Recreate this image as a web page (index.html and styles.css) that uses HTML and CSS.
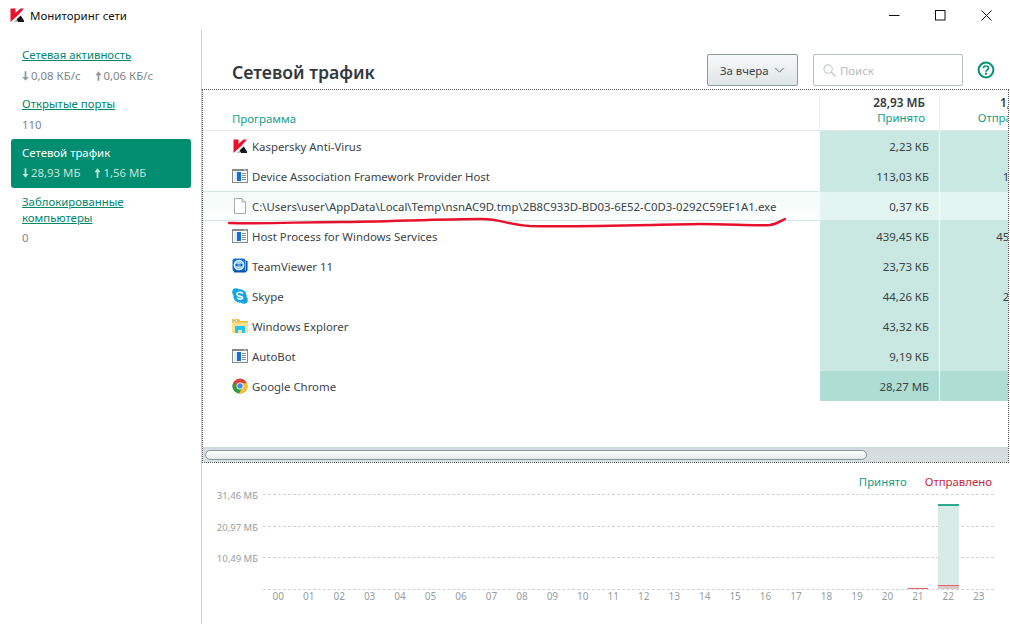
FILE: index.html
```html
<!DOCTYPE html>
<html lang="ru">
<head>
<meta charset="utf-8">
<title>Мониторинг сети</title>
<link rel="stylesheet" href="styles.css">
</head>
<body>
<svg class="defs" width="0" height="0" aria-hidden="true">
  <defs>
    <symbol id="i-k" viewBox="0 0 16 16">
      <path d="M1.500 1.500h5v4.200L11.500 1.500h3.500L9 8.200 1.500 15z" fill="#e8102c"/>
      <path d="M9.500 10.500l2.300-2 3.200 5V15H9l-1.500-2.500z" fill="#15181a"/>
      <path d="M4.500 15L7.500 12.500 9 15z" fill="#b9bcbe"/>
    </symbol>
    <symbol id="i-win" viewBox="0 0 16 16">
      <rect x="0" y="1" width="16" height="14" fill="#85898d"/>
      <rect x="1" y="3" width="14" height="11" fill="#fff"/>
      <rect x="12" y="1.500" width="2" height="1" fill="#dfe1e3"/>
      <rect x="2" y="4" width="3" height="9" fill="#e3ecf6"/>
      <rect x="5" y="4" width="4" height="9" fill="#0f6fd8"/>
      <path d="M10 5.500h4M10 7.500h4M10 9.500h4M10 11.500h4" stroke="#8b8f94"/>
    </symbol>
    <symbol id="i-file" viewBox="0 0 16 16">
      <path d="M2.500.500h7.500l3.500 3.500v11.500h-11z" fill="#fff" stroke="#a8aaac"/>
      <path d="M10 .500v3.500h3.500" fill="#eee" stroke="#a8aaac"/>
    </symbol>
    <symbol id="i-tv" viewBox="0 0 16 16">
      <rect x=".5" y=".5" width="13" height="13" rx="2.500" fill="#0a6fd6"/>
      <path d="M2 14.500h11.500l2-2V3h-1.500v9.500H2z" fill="#0b4fa8"/>
      <circle cx="7" cy="7" r="5.300" fill="#fff"/>
      <circle cx="7" cy="7" r="4.300" fill="#9fd4f7"/>
      <path d="M3 7l2.200-1.800v1.200h3.600V5.200L11 7 8.800 8.800V7.600H5.200v1.200z" fill="#0a57b5"/>
    </symbol>
    <symbol id="i-skype" viewBox="0 0 16 16">
      <circle cx="4" cy="4" r="3.800" fill="#12a5e2"/>
      <circle cx="12" cy="12" r="3.800" fill="#12a5e2"/>
      <circle cx="8" cy="8" r="6.700" fill="#12a5e2"/>
      <path d="M11 5.600c-.6-1-1.700-1.400-3-1.400-1.700 0-3 .8-3 2.100 0 2.700 5.600 1.500 5.600 3.500 0 .8-1 1.300-2.400 1.300-1.300 0-2.300-.5-2.900-1.500" fill="none" stroke="#fff" stroke-width="1.600"/>
    </symbol>
    <symbol id="i-folder" viewBox="0 0 16 16">
      <path d="M0 1h6.500l1.500 2H16v12H0z" fill="#fbe08e"/>
      <path d="M0 1h6.500l1.500 2H16v1.500H0z" fill="#e9bb48"/>
      <rect x="1" y="1.800" width="4" height="1.500" fill="#fff"/>
      <rect x="1.500" y="2.200" width="2" height=".8" fill="#2c9fe0"/>
      <path d="M3 15V8h10v7h-3v-3H6v3z" fill="#22c3f5"/>
    </symbol>
    <symbol id="i-chrome" viewBox="0 0 16 16">
      <circle cx="8" cy="8" r="7.500" fill="#db4437"/>
      <path d="M1.500 4.200A7.500 7.500 0 0 0 7 15.400L10.500 9.500H6z" fill="#2f9e44"/>
      <path d="M15 5.200H8.500L10.800 9 7 15.430A7.500 7.500 0 0 0 15 5.200z" fill="#f7c325"/>
      <circle cx="8" cy="8" r="3.500" fill="#fff"/>
      <circle cx="8" cy="8" r="2.700" fill="#4a89e8"/>
    </symbol>
    <symbol id="i-down" viewBox="0 0 8 11"><path d="M3 0h2v6.500h2.500L4 11 .5 6.500H3z" fill="currentColor"/></symbol>
    <symbol id="i-up" viewBox="0 0 8 11"><path d="M3 11h2V4.500h2.500L4 0 .5 4.500H3z" fill="currentColor"/></symbol>
  </defs>
</svg>

<div class="window">
  <header class="titlebar">
    <svg class="title-icon"><use href="#i-k"/></svg>
    <span class="title-text">Мониторинг сети</span>
    <div class="win-controls">
      <svg class="win-btn" viewBox="0 0 11 11"><path d="M0 5.500h10.500" stroke="#111" fill="none"/></svg>
      <svg class="win-btn" viewBox="0 0 11 11"><rect x=".5" y=".5" width="9.500" height="9.500" stroke="#111" fill="none"/></svg>
      <svg class="win-btn" viewBox="0 0 11 11"><path d="M.5.500l10 10M10.500.500l-10 10" stroke="#111" fill="none"/></svg>
    </div>
  </header>

  <div class="app">
    <nav class="sidebar">
      <div class="nav-item first">
        <a class="nav-link">Сетевая активность</a>
        <div class="nav-stat"><svg class="arr"><use href="#i-down"/></svg>0,08 КБ/с<svg class="arr up"><use href="#i-up"/></svg>0,06 КБ/с</div>
      </div>
      <div class="nav-item second">
        <a class="nav-link">Открытые порты</a>
        <div class="nav-stat">110</div>
      </div>
      <div class="nav-item active">
        <a class="nav-link">Сетевой трафик</a>
        <div class="nav-stat"><svg class="arr"><use href="#i-down"/></svg>28,93 МБ<svg class="arr up"><use href="#i-up"/></svg>1,56 МБ</div>
      </div>
      <div class="nav-item blocked">
        <a class="nav-link">Заблокированные компьютеры</a>
        <div class="nav-stat">0</div>
      </div>
    </nav>

    <main class="main">
      <div class="toolbar">
        <h1 class="heading">Сетевой трафик</h1>
        <button class="period">За вчера
          <svg class="chev" viewBox="0 0 12 7"><path d="M1 1l5 5 5-5" fill="none" stroke="#5c6569" stroke-width="1.100"/></svg>
        </button>
        <div class="search">
          <svg class="search-ic" viewBox="0 0 14 14"><circle cx="5.500" cy="5.500" r="4.500" fill="none" stroke="#c4cacc" stroke-width="1.200"/><path d="M9 9l4.500 4.500" stroke="#c4cacc" stroke-width="1.500"/></svg>
          <span>Поиск</span>
        </div>
        <svg class="help" viewBox="0 0 18 18"><circle cx="9" cy="9" r="7.400" fill="none" stroke="#07936f" stroke-width="2"/><path d="M6.500 7.200c0-1.500 1.100-2.200 2.500-2.200s2.500.8 2.500 2.100c0 1.900-2.500 1.800-2.500 3.700" fill="none" stroke="#07936f" stroke-width="1.700"/><rect x="8" y="11.700" width="2" height="2" fill="#07936f"/></svg>
      </div>

      <section class="table-box">
        <div class="table">
          <div class="row head">
            <div class="c-name"><span class="col-title">Программа</span></div>
            <div class="c-val"><b>28,93 МБ</b><span class="col-title">Принято</span></div>
            <div class="c-val"><b>1,56 МБ</b><span class="col-title">Отправлено</span></div>
          </div>
          <div class="row"><div class="c-name"><svg class="ic"><use href="#i-k"/></svg>Kaspersky Anti-Virus</div><div class="c-val">2,23 КБ</div><div class="c-val">3,11 КБ</div></div>
          <div class="row"><div class="c-name"><svg class="ic"><use href="#i-win"/></svg>Device Association Framework Provider Host</div><div class="c-val">113,03 КБ</div><div class="c-val">18,42 КБ</div></div>
          <div class="row selected"><div class="c-name"><svg class="ic"><use href="#i-file"/></svg>C:\Users\user\AppData\Local\Temp\nsnAC9D.tmp\2B8C933D-BD03-6E52-C0D3-0292C59EF1A1.exe</div><div class="c-val">0,37 КБ</div><div class="c-val">0,72 КБ</div></div>
          <div class="row"><div class="c-name"><svg class="ic"><use href="#i-win"/></svg>Host Process for Windows Services</div><div class="c-val">439,45 КБ</div><div class="c-val">451,20 КБ</div></div>
          <div class="row"><div class="c-name"><svg class="ic"><use href="#i-tv"/></svg>TeamViewer 11</div><div class="c-val">23,73 КБ</div><div class="c-val">9,06 КБ</div></div>
          <div class="row"><div class="c-name"><svg class="ic"><use href="#i-skype"/></svg>Skype</div><div class="c-val">44,26 КБ</div><div class="c-val">25,14 КБ</div></div>
          <div class="row"><div class="c-name"><svg class="ic"><use href="#i-folder"/></svg>Windows Explorer</div><div class="c-val">43,32 КБ</div><div class="c-val">5,27 КБ</div></div>
          <div class="row"><div class="c-name"><svg class="ic"><use href="#i-win"/></svg>AutoBot</div><div class="c-val">9,19 КБ</div><div class="c-val">2,48 КБ</div></div>
          <div class="row chrome"><div class="c-name"><svg class="ic"><use href="#i-chrome"/></svg>Google Chrome</div><div class="c-val">28,27 МБ</div><div class="c-val">1,34 МБ</div></div>
        </div>
        <div class="hscroll"><div class="thumb"></div></div>
      </section>

      <section class="chart">
        <div class="legend"><span class="in">Принято</span><span class="out">Отправлено</span></div>
        <div class="plot">
          <div class="gridline"><span>31,46 МБ</span></div>
          <div class="gridline"><span>20,97 МБ</span></div>
          <div class="gridline"><span>10,49 МБ</span></div>
          <div class="gridline base"></div>
          <div class="bars">
            <div class="slot s21"><i class="sent tiny"></i></div>
            <div class="slot s22"><i class="recv"></i><i class="sent"></i></div>
          </div>
        </div>
        <div class="hours">
          <span>00</span><span>01</span><span>02</span><span>03</span><span>04</span><span>05</span><span>06</span><span>07</span><span>08</span><span>09</span><span>10</span><span>11</span><span>12</span><span>13</span><span>14</span><span>15</span><span>16</span><span>17</span><span>18</span><span>19</span><span>20</span><span>21</span><span>22</span><span>23</span>
        </div>
      </section>
    </main>
  </div>
</div>

<svg class="scribble" viewBox="0 0 1010 630" aria-hidden="true">
  <path d="M229 223C270 224 300 222 340 222S440 219 482 219C500 219 510 225 530 226C580 227 640 225 700 224C730 224 755 226 770 225C777 224 781 221 785 219" fill="none" stroke="#e8112d" stroke-width="2.400" stroke-linecap="round"/>
</svg>
</body>
</html>
```
FILE: styles.css
```css
* { box-sizing: border-box; }
html, body { margin: 0; padding: 0; }
body {
  position: relative;
  width: 1010px;
  height: 630px;
  overflow: hidden;
  background: #fff;
  font-family: "Noto Sans", "Open Sans", "Liberation Sans", sans-serif;
  font-size: 11.4px;
  color: #3b4347;
}
.defs { position: absolute; }
.window { display: flex; flex-direction: column; width: 1010px; height: 630px; }

.titlebar { display: flex; align-items: center; height: 30px; flex: none; padding-left: 9px; }
.title-icon { width: 16px; height: 16px; margin-right: 5px; }
.title-text { color: #111; font-size: 11.5px; }
.win-controls { display: flex; gap: 35px; margin-left: auto; margin-right: 18px; }
.win-btn { width: 11px; height: 11px; }

.app { display: flex; height: 594px; flex: none; }
.sidebar { width: 202px; flex: none; border-right: 1px solid #c6ced1; padding: 17px 10px 0 11px; }
.nav-item { padding: 0 11px; }
.nav-link { display: block; color: #00876c; text-decoration: underline; line-height: 16px; }
.nav-stat { display: flex; align-items: center; color: #7d8588; line-height: 16px; margin-top: 4px; }
.nav-item.first { margin-bottom: 12px; }
.nav-item.first .nav-stat { margin-top: 5px; }
.nav-item.second { margin-bottom: 6px; }
.nav-item.second .nav-stat { margin-top: 5px; }
.arr { width: 7px; height: 10px; margin-right: 2px; flex: none; color: #8f979a; }
.arr.up { margin-left: 14px; }
.nav-item.active {
  background: #008d70;
  border-radius: 3px;
  height: 49px;
  margin-bottom: 6px;
  padding-top: 6px;
}
.nav-item.active .nav-link { color: #fff; text-decoration: none; }
.nav-item.active .nav-stat { color: #c4e5dc; margin-top: 4px; }
.nav-item.active .arr { color: #c4e5dc; }

.main { flex: 1; min-width: 0; display: flex; flex-direction: column; }
.toolbar { display: flex; align-items: center; height: 59px; flex: none; padding: 24px 15px 3px 30px; }
.heading { margin: 0 auto 0 0; font-size: 17.7px; font-weight: 600; color: #33393c; position: relative; top: 2px; }
.period {
  display: flex; align-items: center; justify-content: space-between;
  width: 91px; height: 32px; padding: 0 12px;
  border: 1px solid #8d9a9a; border-radius: 2px;
  background: linear-gradient(#f7f9f9, #dfe6e5);
  font: inherit; color: #3b4347;
}
.chev { width: 11px; height: 6px; }
.search {
  display: flex; align-items: center; gap: 4px;
  width: 150px; height: 32px; margin-left: 15px; padding-left: 9px;
  border: 1px solid #b6bfbf; border-radius: 2px;
  color: #b5bbbd;
}
.search-ic { width: 13px; height: 13px; }
.help { width: 18px; height: 18px; margin-left: 14px; }

.table-box {
  width: 807px; height: 374px; flex: none;
  border: 1px dotted #555; overflow: hidden;
  display: flex; flex-direction: column;
}
.table { flex: 1; min-height: 0; }
.row { display: grid; grid-template-columns: 616px 120px 120px; height: 30px; }
.c-name { display: flex; align-items: center; padding-left: 29px; white-space: nowrap; }
.c-val {
  display: flex; flex-direction: column; justify-content: center; align-items: flex-end;
  padding-right: 10px; background: #c8e8e1; border-left: 1px solid #fff; white-space: nowrap;
}
.ic { width: 16px; height: 16px; margin-right: 4px; flex: none; }
.row.head { height: 41px; border-bottom: 1px solid #e3e6e6; align-items: stretch; }
.row.head .c-name { align-items: flex-end; padding-bottom: 4px; }
.row.head .c-val { background: none; border-left: 1px solid #eef0f0; padding-right: 14px; line-height: 16px; }
.row.head b { font-size: 11.8px; font-weight: 600; color: #33393c; }
.col-title { color: #14a087; }
.row.selected { background: linear-gradient(#f3faf8, #fbfefd); box-shadow: inset 0 1px #cfe8e1, inset 0 -1px #cfe8e1; }
.row.selected .c-val { background: #e3f5f0; box-shadow: inset 0 1px #cfe8e1, inset 0 -1px #cfe8e1; }
.row.chrome .c-val { background: #aeddd3; }

.hscroll {
  height: 15px; flex: none; padding: 3px 0 1px 2px;
  background: linear-gradient(#d3dadd, #d9dfe1);
}
.thumb {
  width: 662px; height: 10px;
  border: 1px solid #8a9596; border-radius: 5px;
  background: linear-gradient(#fff, #e3e9e9);
}

.chart { flex: 1; min-height: 0; padding: 11px 16px 0 61px; position: relative; }
.legend { display: flex; justify-content: flex-end; gap: 18px; line-height: 16px; padding-right: 2px; }
.legend .in { color: #14a087; }
.legend .out { color: #c8283c; }
.plot { position: relative; height: 95px; margin-top: 4px; }
.gridline { height: 31.5px; border-top: 1px dashed #ccd5d8; position: relative; }
.gridline.base { height: 0; }
.gridline span {
  position: absolute; right: 100%; top: -7px; margin-right: 5px;
  white-space: nowrap; font-size: 9.5px; line-height: 16px; color: #969ea0;
}
.bars { position: absolute; inset: 0; display: grid; grid-template-columns: repeat(24, 1fr); }
.slot { display: flex; flex-direction: column; justify-content: flex-end; padding: 0 5px; }
.s21 { grid-column: 22; }
.s22 { grid-column: 23; }
.slot i { display: block; }
.recv { height: 81px; background: #d9ebe7; border-top: 2px solid #2fa98e; }
.sent { height: 4px; background: #dbc9c7; border-top: 1px solid #e8606a; }
.sent.tiny { height: 1px; background: none; }
.hours { display: grid; grid-template-columns: repeat(24, 1fr); text-align: center; font-size: 10px; line-height: 14px; color: #969ea0; }

.scribble { position: absolute; left: 0; top: 0; width: 1010px; height: 630px; pointer-events: none; }
```
